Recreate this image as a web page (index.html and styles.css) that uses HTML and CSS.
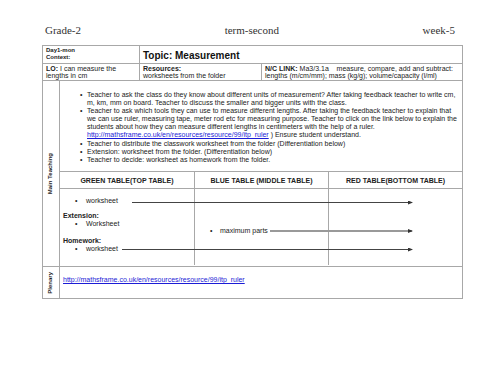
FILE: index.html
```html
<!DOCTYPE html>
<html>
<head>
<meta charset="utf-8">
<link rel="stylesheet" href="styles.css">
</head>
<body>
<div class="page">
  <div class="doc-head">
    <span>Grade-2</span>
    <span>term-second</span>
    <span>week-5</span>
  </div>
  <div class="plan">
    <div class="cell day span2">
      <b>Day1-mon</b><br><b>Context:</b>
    </div>
    <div class="cell topic span2">Topic: Measurement</div>

    <div class="cell lo span2"><b>LO:</b> I can measure the<br>lengths in cm</div>
    <div class="cell"><b>Resources:</b><br>worksheets from the folder</div>
    <div class="cell"><b>N/C LINK:</b> Ma3/3.1a&nbsp;&nbsp;&nbsp; measure, compare, add and subtract:<br>lengths (m/cm/mm); mass (kg/g); volume/capacity (l/ml)</div>

    <div class="cell side"><span class="side-label">Main Teaching</span></div>
    <div class="main span3">
      <ul class="steps">
        <li>Teacher to ask the class do they know about different units of measurement? After taking feedback teacher to write cm,<br>m, km, mm on board. Teacher to discuss the smaller and bigger units with the class.</li>
        <li>Teacher to ask which tools they can use to measure different lengths. After taking the feedback teacher to explain that<br>we can use ruler, measuring tape, meter rod etc for measuring purpose. Teacher to click on the link below to explain the<br>students about how they can measure different lengths in centimeters with the help of a ruler.<br><a href="#">http://mathsframe.co.uk/en/resources/resource/99/itp_ruler</a> ) Ensure student understand.</li>
        <li>Teacher to distribute the classwork worksheet from the folder (Differentiation below)</li>
        <li>Extension: worksheet from the folder. (Differentiation below)</li>
        <li>Teacher to decide: worksheet as homework from the folder.</li>
      </ul>
      <div class="groups">
        <div class="ghead">GREEN TABLE(TOP TABLE)</div>
        <div class="ghead">BLUE TABLE (MIDDLE TABLE)</div>
        <div class="ghead">RED TABLE(BOTTOM TABLE)</div>
        <div class="gcell green">
          <ul class="blist"><li>worksheet</li></ul>
          <div class="sub"><b>Extension:</b></div>
          <ul class="blist"><li>Worksheet</li></ul>
          <div class="sub hw"><b>Homework:</b></div>
          <ul class="blist"><li>worksheet</li></ul>
        </div>
        <div class="gcell blue">
          <ul class="blist"><li>maximum parts</li></ul>
        </div>
        <div class="gcell"></div>
        <svg class="arrows" width="402" height="76" viewBox="0 0 402 76">
          <defs>
            <marker id="ah" markerWidth="5" markerHeight="4" refX="4" refY="2" orient="auto" markerUnits="userSpaceOnUse">
              <path d="M0,0 L5,2 L0,4 Z" fill="#333"/>
            </marker>
          </defs>
          <line x1="72" y1="13.5" x2="352" y2="13.5" stroke="#444" stroke-width="1" marker-end="url(#ah)"/>
          <line x1="210" y1="42" x2="352" y2="42" stroke="#999" stroke-width="2" marker-end="url(#ah)"/>
          <line x1="62" y1="60.5" x2="352" y2="60.5" stroke="#444" stroke-width="1" marker-end="url(#ah)"/>
        </svg>
      </div>
    </div>

    <div class="cell side"><span class="side-label">Plenary</span></div>
    <div class="cell plenary span3"><a href="#">http://mathsframe.co.uk/en/resources/resource/99/itp_ruler</a></div>
  </div>
</div>
</body>
</html>
```

FILE: styles.css
```css
html, body {
  margin: 0;
  padding: 0;
  background: #ffffff;
}
body {
  font-family: "Liberation Sans", Arial, sans-serif;
  font-size: 7px;
  color: #222;
}
.page {
  padding: 24px 0 0 42px;
  width: 421px;
}
.doc-head {
  display: flex;
  justify-content: space-between;
  padding: 0 8px 0 3px;
  font-family: "Liberation Serif", "Times New Roman", serif;
  font-size: 11px;
  line-height: 13px;
  color: #333;
  margin-bottom: 8px;
}
.plan {
  display: grid;
  grid-template-columns: 16px 79px 121px 200px;
  grid-template-rows: 17px 16px 185px 31px;
  gap: 1px;
  padding: 1px;
  background: #a8a8a8;
  width: 419px;
}
.cell {
  background: #fff;
  padding: 0.5px 3px 0;
  line-height: 7.6px;
}
.span2 { grid-column: span 2; }
.span3 { grid-column: span 3; }
.day {
  font-size: 6px;
  padding-top: 1px;
  line-height: 7px;
}
.topic {
  font-size: 10px;
  font-weight: bold;
  line-height: 17px;
  color: #111;
}
.side {
  display: flex;
  align-items: center;
  justify-content: center;
  padding: 0;
}
.side-label {
  writing-mode: vertical-rl;
  transform: rotate(180deg);
  font-weight: bold;
  font-size: 6px;
  white-space: nowrap;
}
.main {
  background: #fff;
  display: flex;
  flex-direction: column;
}
.steps {
  margin: 0;
  padding: 10px 0 0 27px;
  height: 90px;
  box-sizing: border-box;
  list-style: none;
  line-height: 8.1px;
  white-space: nowrap;
}
.steps li {
  position: relative;
}
.steps li::before,
.blist li::before {
  content: "\2022";
  position: absolute;
  left: -7px;
}
a {
  color: #1c1cd6;
  text-decoration: underline;
}
.groups {
  position: relative;
  display: grid;
  grid-template-columns: 134px 133px 133px;
  grid-template-rows: 16px 76px;
  gap: 1px;
  padding-top: 1px;
  background: #a8a8a8;
}
.ghead {
  background: #fff;
  font-weight: bold;
  font-size: 7px;
  display: flex;
  align-items: center;
  justify-content: center;
}
.gcell {
  background: #fff;
}
.blist {
  list-style: none;
  margin: 0;
  padding: 0 0 0 26px;
  line-height: 8px;
}
.blist li {
  position: relative;
}
.green {
  padding-top: 8px;
}
.green .blist li::before { left: -11px; }
.sub {
  padding-left: 3px;
  margin-top: 7px;
  line-height: 8px;
}
.sub.hw { margin-top: 9px; }
.blue {
  padding-top: 38px;
}
.blue .blist { padding-left: 25px; }
.blue .blist li::before { left: -10px; }
.arrows {
  position: absolute;
  left: 0;
  top: 18px;
  pointer-events: none;
}
.plenary {
  padding-top: 9px;
  line-height: 8px;
}
```
